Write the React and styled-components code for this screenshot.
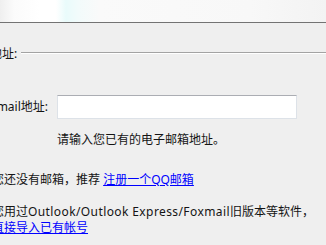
import React from "react";
import styled, { createGlobalStyle } from "styled-components";

const Global = createGlobalStyle`
  html, body { margin: 0; padding: 0; background: #efefef; }
  body { font-family: "Noto Sans", "Noto Sans CJK SC", sans-serif; font-size: 12px; color: #141414; overflow: hidden; }
`;

const Page = styled.div`
  width: 326px;
  height: 245px;
  overflow: hidden;
  background: #efefef;
`;

const Header = styled.div`
  height: 22px;
  border-bottom: 1px solid #737373;
  background: linear-gradient(90deg, #efefef 0px, #fbfbfb 14px, #ffffff 40px, #ffffff 56px, #e9fbfb 66px, #f2fbfb 78px, #fafafa 100px, #f8f8f8 250px, #f3f3f3 326px);
`;

const Body = styled.div`
  display: flex;
  flex-direction: column;
`;

const GroupRow = styled.div`
  display: flex;
  align-items: center;
  gap: 4px;
  margin-top: 23px;
  margin-left: -34px;
  height: 16px;
  line-height: 16px;
`;

const GroupLine = styled.div`
  flex: 1;
  height: 0;
  border-top: 1px solid #a3a3a3;
  border-bottom: 1px solid #ffffff;
  margin-top: -3px;
`;

const FieldRow = styled.div`
  display: flex;
  align-items: center;
  margin-top: 33px;
  margin-left: -52px;
  gap: 9px;
`;

const Label = styled.label`
  width: 100px;
  text-align: right;
  white-space: nowrap;
  line-height: 16px;
`;

const Input = styled.input`
  box-sizing: border-box;
  width: 240px;
  height: 24px;
  background: #fff;
  border: 1px solid #dde2e8;
  border-top-color: #abadb3;
  outline: none;
  padding: 0 4px;
  font: inherit;
`;

const Hint = styled.div`
  margin-top: 13px;
  margin-left: 57px;
  line-height: 16px;
  white-space: nowrap;
`;

const Para = styled.div`
  margin-top: ${(p) => p.$top}px;
  margin-left: -8px;
  line-height: 16px;
  white-space: nowrap;
`;

const Latin = styled.span`
  letter-spacing: 0.4px;
`;

const Link = styled.a`
  color: #0000ff;
  text-decoration: underline;
  cursor: pointer;
`;

export default function App() {
  return (
    <Page>
      <Global />
      <Header />
      <Body>
        <GroupRow>
          <span>邮箱地址:</span>
          <GroupLine />
        </GroupRow>
        <FieldRow>
          <Label>Email地址:</Label>
          <Input type="text" />
        </FieldRow>
        <Hint>请输入您已有的电子邮箱地址。</Hint>
        <Para $top={24}>
          您还没有邮箱，推荐 <Link>注册一个QQ邮箱</Link>
        </Para>
        <Para $top={16}>
          您用过<Latin>Outlook/Outlook Express/Foxmail</Latin>旧版本等软件，
          <br />
          <Link>直接导入已有帐号</Link>
        </Para>
      </Body>
    </Page>
  );
}
